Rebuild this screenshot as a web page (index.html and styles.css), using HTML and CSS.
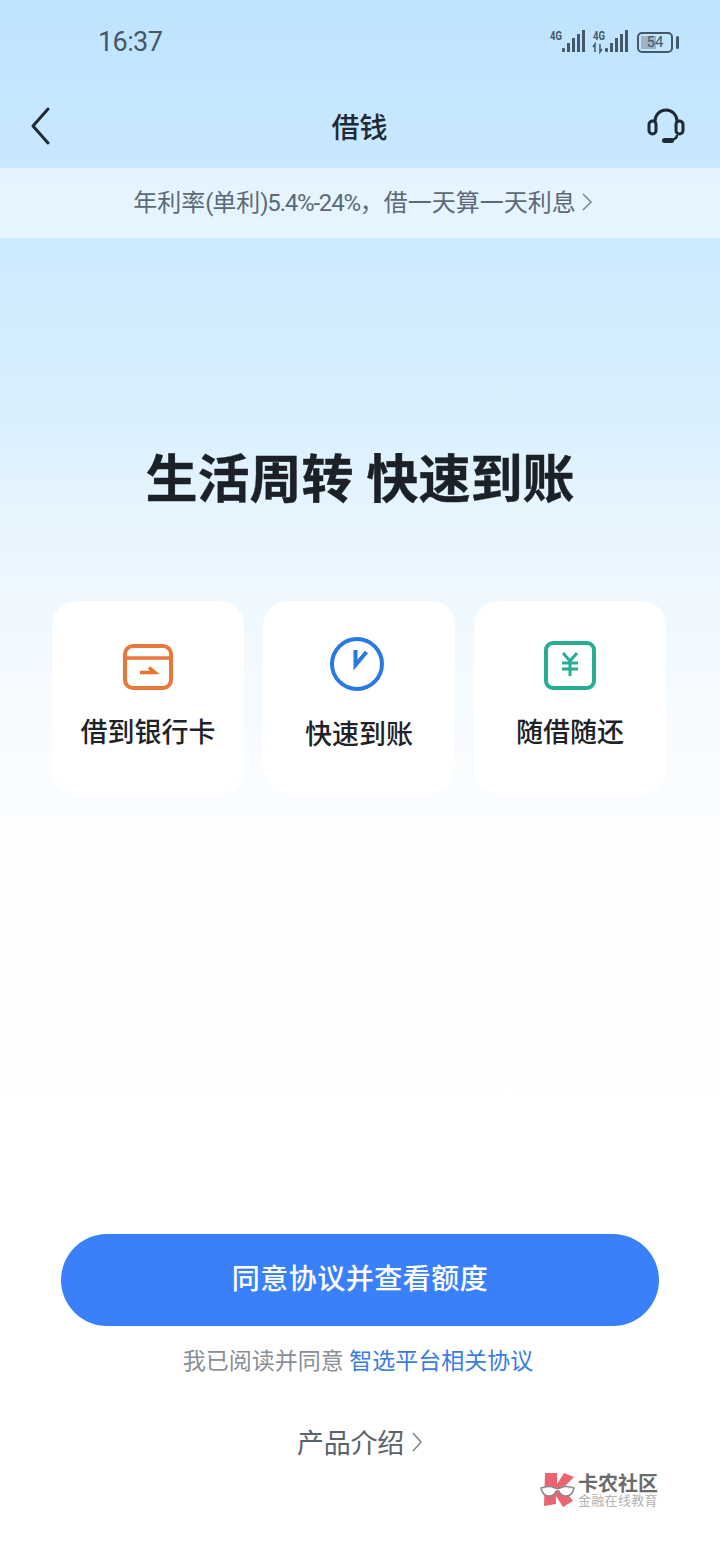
FILE: index.html
```html
<!DOCTYPE html>
<html lang="zh-CN">
<head>
    <meta charset="UTF-8">
    <meta name="viewport" content="width=device-width, initial-scale=1.0">
    <title>借钱</title>
    <link rel="stylesheet" href="styles.css">
</head>
<body>
    <div class="page">
        <div class="status-bar">
            <span class="time">16:37</span>
            <div class="status-icons">
                <svg class="signal" width="37" height="32" viewBox="0 -4 37 32">
                    <text x="1" y="10" class="net-label" textLength="12" lengthAdjust="spacingAndGlyphs">4G</text>
                    <rect x="13" y="18" width="3" height="4" rx="1"/>
                    <rect x="18" y="13" width="3" height="9"/>
                    <rect x="23" y="8" width="3" height="14"/>
                    <rect x="28" y="4" width="3" height="18"/>
                    <rect x="33" y="0" width="3" height="22"/>
                </svg>
                <svg class="signal" width="37" height="32" viewBox="0 -4 37 32">
                    <text x="1" y="10" class="net-label" textLength="12" lengthAdjust="spacingAndGlyphs">4G</text>
                    <path d="M3 22v-8L1 17M8 14v8l2-3" class="arrows"/>
                    <rect x="13" y="18" width="3" height="4" rx="1"/>
                    <rect x="18" y="13" width="3" height="9"/>
                    <rect x="23" y="8" width="3" height="14"/>
                    <rect x="28" y="4" width="3" height="18"/>
                    <rect x="33" y="0" width="3" height="22"/>
                </svg>
                <div class="battery">
                    <div class="battery-body">
                        <div class="battery-level"></div>
                        <span class="battery-text">54</span>
                    </div>
                    <div class="battery-cap"></div>
                </div>
            </div>
        </div>

        <div class="nav-bar">
            <svg width="24" height="38" viewBox="0 0 24 38" class="nav-icon nav-icon-left">
                <path d="M20 2L5 19l15 17" fill="none" stroke="#1f2a35" stroke-width="3" stroke-linecap="round" stroke-linejoin="round"/>
            </svg>
            <h1 class="nav-title">借钱</h1>
            <svg width="40" height="36" viewBox="0 0 40 36" class="nav-icon nav-icon-right">
                <path d="M9 14v-1a11 11 0 0 1 22 0v1" fill="none" stroke="#1f2a35" stroke-width="3"/>
                <rect x="3" y="13" width="7" height="13" rx="3.500" fill="none" stroke="#1f2a35" stroke-width="3"/>
                <rect x="30" y="13" width="7" height="13" rx="3.500" fill="none" stroke="#1f2a35" stroke-width="3"/>
                <path d="M31 27c0 3-3 5-8 5.500" fill="none" stroke="#1f2a35" stroke-width="2.500"/>
                <rect x="16" y="30" width="12" height="5" rx="2.500" fill="#1f2a35"/>
            </svg>
        </div>

        <div class="rate-banner">
            <span class="rate-text">年利率<span class="narrow">(</span>单利<span class="narrow">)5.4%-24%</span>，借一天算一天利息</span>
            <svg width="12" height="20" viewBox="0 0 12 20" class="chevron">
                <path d="M2 2l8 8-8 8" fill="none" stroke="#7a8591" stroke-width="1.500"/>
            </svg>
        </div>

        <h2 class="headline">生活周转 快速到账</h2>

        <div class="features">
            <div class="feature-card">
                <svg width="50" height="46" viewBox="0 0 50 46" class="feature-icon">
                    <rect x="2" y="2" width="46" height="42" rx="8" fill="none" stroke="#e8783a" stroke-width="4"/>
                    <path d="M2 14h46" stroke="#e8783a" stroke-width="3.500"/>
                    <path d="M17 28.500h15l-6-5" fill="none" stroke="#ee7427" stroke-width="3.500"/>
                </svg>
                <span class="feature-label">借到银行卡</span>
            </div>
            <div class="feature-card">
                <svg width="54" height="54" viewBox="0 0 54 54" class="feature-icon clock">
                    <circle cx="27" cy="27" r="25" fill="none" stroke="#2a78e4" stroke-width="4"/>
                    <path d="M25.500 13v15l11-13" fill="none" stroke="#2a78e4" stroke-width="4"/>
                </svg>
                <span class="feature-label label-low">快速到账</span>
            </div>
            <div class="feature-card">
                <svg width="52" height="49" viewBox="0 0 52 49" class="feature-icon yen">
                    <rect x="2" y="2" width="48" height="45" rx="7" fill="none" stroke="#27ad93" stroke-width="4"/>
                    <path d="M19 12l7 8 7-8M18 22h16M18 28h16M26 20v15" fill="none" stroke="#27ad93" stroke-width="3"/>
                </svg>
                <span class="feature-label">随借随还</span>
            </div>
        </div>

        <div class="actions">
            <button class="primary-btn">同意协议并查看额度</button>
            <p class="agreement">我已阅读并同意 <a class="agreement-link">智选平台相关协议</a></p>
            <div class="product-intro">
                <span>产品介绍</span>
                <svg width="12" height="22" viewBox="0 0 12 22" class="chevron">
                    <path d="M2 2l8 9-8 9" fill="none" stroke="#7a8591" stroke-width="1.500"/>
                </svg>
            </div>
        </div>

        <div class="watermark">
            <svg width="35" height="36" viewBox="0 0 35 36">
                <path d="M5 1h12v11l7-11 10 4-11 11 10 13-10 6-7-11v8l-12 2z" fill="#ea6472"/>
                <path d="M1 16c5-2 10-2 14 0 3 1 2 1 5 0 4-2 9-2 14 0-1 5-3 8-8 8-4 0-6-2-7-5-2 0-2 0-3 0-1 3-3 5-7 5-5 0-7-3-8-8z" fill="#fff" stroke="#8a8a8a" stroke-width="1.500"/>
            </svg>
            <div class="watermark-text">
                <span class="watermark-name">卡农社区</span>
                <span class="watermark-sub">金融在线教育</span>
            </div>
        </div>
    </div>
</body>
</html>
```
FILE: styles.css
```css
* {
    box-sizing: border-box;
}
body {
    margin: 0;
    font-family: Roboto, "Noto Sans CJK SC", sans-serif;
}
.page {
    position: relative;
    width: 720px;
    height: 1560px;
    overflow: hidden;
    background: linear-gradient(180deg, #bfe4ff 0%, #cdeaff 15%, #d8effe 26%, #e5f4fe 32%, #eff8ff 38.5%, #f6fbff 45%, #fbfdff 52%, #ffffff 70%);
}
.status-bar {
    height: 84px;
    padding: 0 41px 0 98px;
    display: flex;
    align-items: center;
    justify-content: space-between;
}
.time {
    font-size: 27px;
    color: #44586a;
    letter-spacing: -0.600px;
}
.status-icons {
    display: flex;
    align-items: center;
    gap: 6px;
    color: #44586a;
}
.signal {
    display: block;
    fill: #44586a;
}
.net-label {
    font-size: 12.500px;
    font-weight: 700;
}
.arrows {
    fill: none;
    stroke: #44586a;
    stroke-width: 1.500;
}
.battery {
    display: flex;
    align-items: center;
    gap: 3px;
    margin-left: 2px;
}
.battery-body {
    position: relative;
    width: 36px;
    height: 21px;
    border: 2px solid #44586a;
    border-radius: 5px;
    display: flex;
    align-items: center;
    justify-content: center;
}
.battery-level {
    position: absolute;
    left: 2px;
    top: 2px;
    bottom: 2px;
    width: 15px;
    background: #9fb2c2;
}
.battery-text {
    position: relative;
    font-size: 15px;
    color: #44586a;
}
.battery-cap {
    width: 3px;
    height: 13px;
    border-radius: 2px;
    background: #44586a;
}
.nav-bar {
    height: 84px;
    padding: 0 31px 0 30px;
    display: grid;
    grid-template-columns: 1fr auto 1fr;
    align-items: center;
}
.nav-icon {
    display: block;
}
.nav-icon-left {
    margin-left: -2px;
}
.nav-icon-right {
    justify-self: end;
    margin-right: 3px;
}
.nav-title {
    margin: 0;
    font-size: 28px;
    font-weight: 500;
    color: #1f2a35;
}
.rate-banner {
    height: 70px;
    padding: 0 0 2px 6px;
    display: flex;
    align-items: center;
    justify-content: center;
    gap: 5px;
    background: rgba(255, 255, 255, 0.5);
    font-size: 24px;
    color: #5c6a78;
}
.rate-text {
    position: relative;
    top: -2px;
}
.narrow {
    letter-spacing: -1.200px;
}
.chevron {
    display: block;
}
.headline {
    margin: 203px 0 0;
    height: 80px;
    line-height: 80px;
    text-align: center;
    font-size: 52px;
    font-weight: 700;
    color: #1b2127;
    -webkit-text-stroke: 0.400px #1b2127;
}
.features {
    margin-top: 80px;
    padding: 0 54px 0 52px;
    display: grid;
    grid-template-columns: repeat(3, 192px);
    column-gap: 19px;
}
.feature-card {
    height: 193px;
    padding-top: 36px;
    display: flex;
    flex-direction: column;
    align-items: center;
    background: #fff;
    border-radius: 24px;
}
.feature-icon {
    display: block;
    margin-top: 7px;
}
.feature-icon.clock {
    margin: 0 4px 0 0;
}
.feature-icon.yen {
    margin-top: 4px;
}
.feature-label {
    margin-top: 23px;
    font-size: 27px;
    font-weight: 500;
    line-height: 40px;
    color: #1f2328;
}
.label-low {
    margin-top: 24px;
}
.actions {
    margin-top: 440px;
    display: flex;
    flex-direction: column;
    align-items: center;
}
.primary-btn {
    width: 598px;
    height: 92px;
    padding: 0 0 6px;
    border: 0;
    border-radius: 46px;
    background: #3b80fb;
    color: #fff;
    font-family: inherit;
    font-size: 28px;
    font-weight: 500;
    letter-spacing: 0.500px;
}
.agreement {
    margin: 19px 0 0;
    padding-right: 4px;
    line-height: 34px;
    font-size: 23px;
    color: #8a8f96;
}
.agreement-link {
    color: #3a7de0;
}
.product-intro {
    margin-top: 43px;
    display: flex;
    align-items: center;
    gap: 7px;
    font-size: 27px;
    letter-spacing: -0.300px;
    color: #5b626a;
}
.watermark {
    position: absolute;
    left: 540px;
    top: 1472px;
    display: flex;
    align-items: flex-start;
    gap: 3px;
}
.watermark-text {
    display: flex;
    flex-direction: column;
    padding-top: 2px;
}
.watermark-name {
    font-size: 20px;
    line-height: 20px;
    font-weight: 700;
    color: #6b6b6b;
}
.watermark-sub {
    font-size: 13px;
    line-height: 14px;
    letter-spacing: 0.300px;
    color: #b4b4b4;
}
```
